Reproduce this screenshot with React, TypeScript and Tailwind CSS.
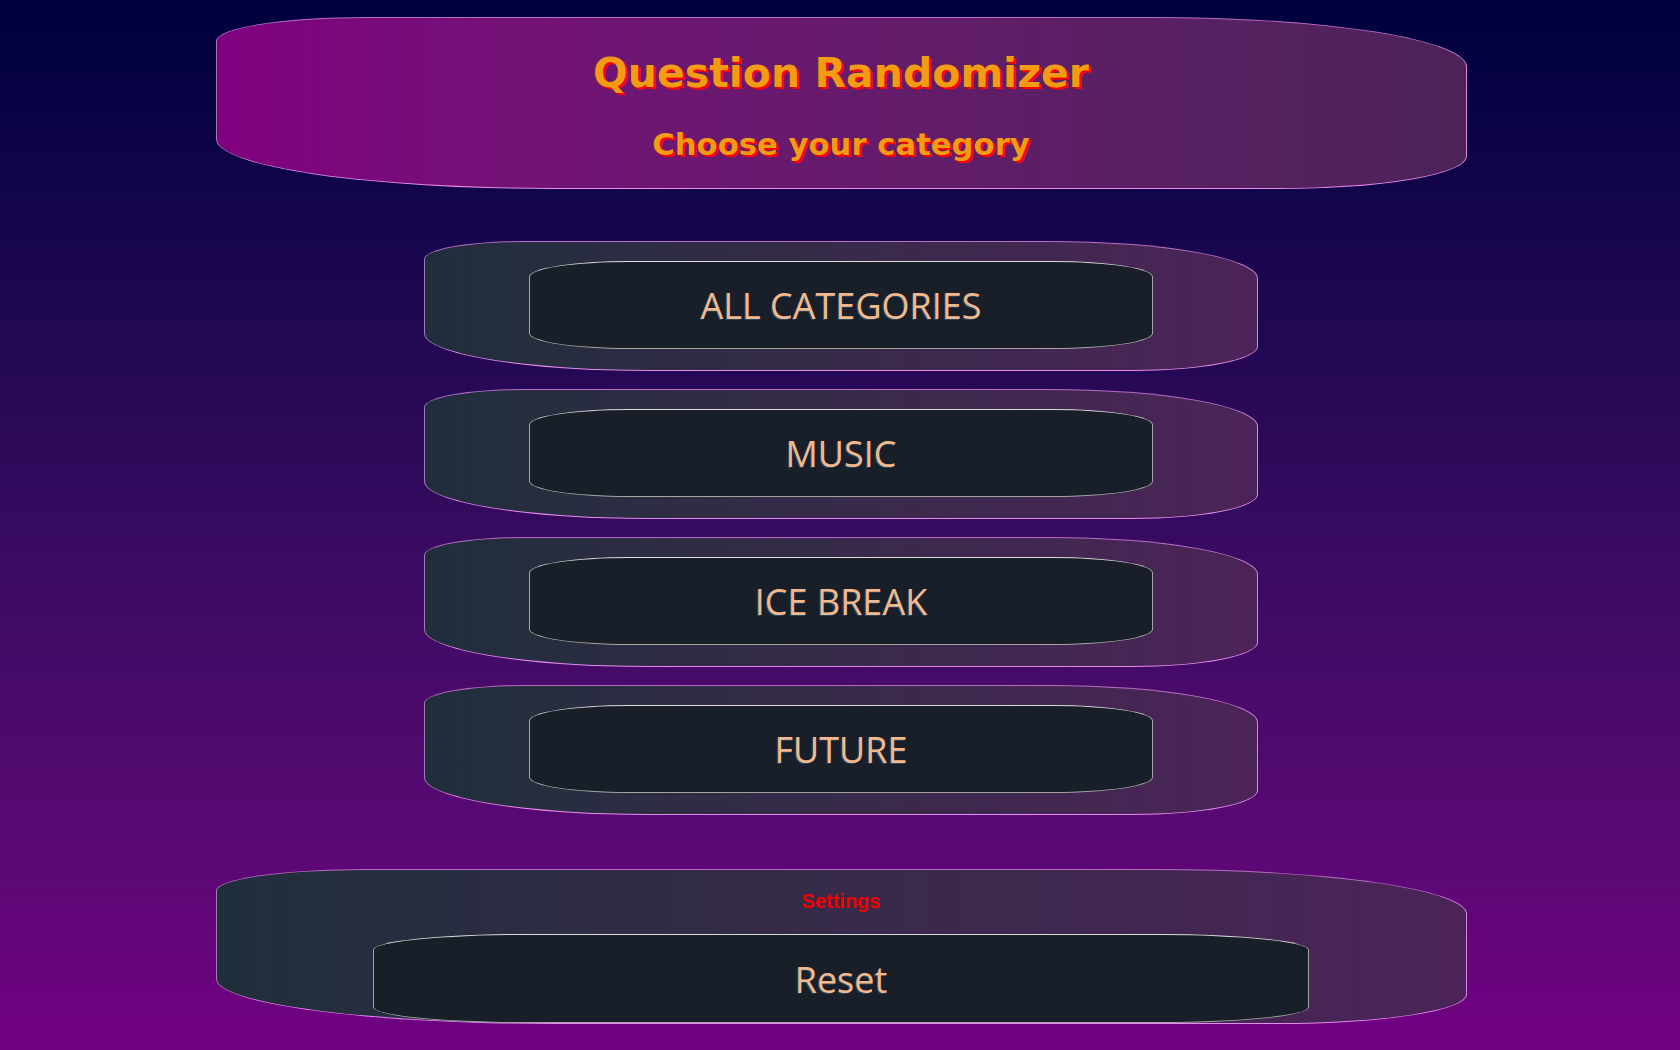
import React from "react";

const categories = ["ALL CATEGORIES", "MUSIC", "ICE BREAK", "FUTURE"];

const wobbly = "rounded-[12%_25%_15%_27%/14%_29%_19%_29%]";
const edge = "border border-[#a779b0] border-t-[#b86cc4] border-r-[#d987e0] border-b-[#e58bec]";
const pill =
  "rounded-[16%/18%] border border-[#a4a4a4] border-t-[#dcdcdc] bg-[#181f29] text-[36px] text-[#f3b98d] font-['Open_Sans',sans-serif] [text-shadow:-1px_1px_0_rgba(60,140,200,0.35)] flex items-center justify-center pt-[2px]";

function CategoryButton({ label }: { label: string }) {
  return (
    <div
      className={`w-[834px] h-[130px] mx-auto flex justify-center items-start pt-[19px] bg-gradient-to-r from-[#1f2e3b] to-[#4c2359] ${wobbly} ${edge}`}
    >
      <button className={`w-[624px] h-[88px] ${pill}`}>{label}</button>
    </div>
  );
}

export default function App() {
  return (
    <div className="min-h-screen w-full bg-gradient-to-b from-[#00003e] to-[#720082] pt-[17px] pb-[26px] pl-[2px]">
      <header
        className={`w-[1251px] h-[172px] mx-auto flex flex-col items-center pt-[35px] bg-gradient-to-r from-[#800080] to-[#4c2359] ${wobbly} ${edge}`}
      >
        <h1 className="text-[41px] leading-none font-bold text-[#f39c12] font-['DejaVu_Sans',sans-serif] [text-shadow:2px_2px_0_#ff0000]">
          Question Randomizer
        </h1>
        <h2 className="mt-[36px] text-[30.7px] leading-none font-bold text-[#f39c12] font-['DejaVu_Sans',sans-serif] [text-shadow:2px_2px_0_#ff0000]">
          Choose your category
        </h2>
      </header>

      <div className="mt-[52px] flex flex-col gap-[18px]">
        {categories.map((c) => (
          <CategoryButton key={c} label={c} />
        ))}
      </div>

      <section
        className={`mt-[54px] w-[1251px] h-[155px] mx-auto flex flex-col items-center pt-[21px] bg-gradient-to-r from-[#1f2e3b] to-[#4c2359] ${wobbly} ${edge}`}
      >
        <p className="text-[20px] leading-none font-bold text-[#f00000] font-['Liberation_Sans',Arial,sans-serif]">
          Settings
        </p>
        <button className={`mt-[23px] w-[936px] h-[89px] ${pill}`}>Reset</button>
      </section>
    </div>
  );
}
